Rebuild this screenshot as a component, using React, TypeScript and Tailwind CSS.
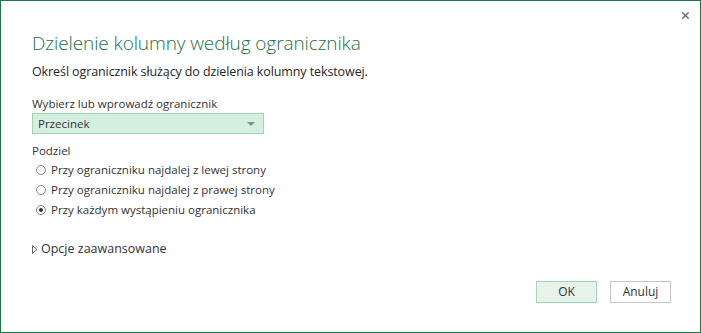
import { X } from 'lucide-react';

function Radio({ checked, label }: { checked?: boolean; label: string }) {
  return (
    <label className="flex items-center h-[20px] pl-[4px]">
      <span className="w-[10px] h-[10px] rounded-full border border-[#8a8a8a] bg-white flex items-center justify-center">
        {checked && <span className="w-[4px] h-[4px] rounded-full bg-[#333]" />}
      </span>
      <span className="ml-[5px]">{label}</span>
    </label>
  );
}

export default function App() {
  return (
    <div
      className="w-[701px] h-[333px] bg-white border border-[#217346] flex flex-col text-[#333] text-[11.5px]"
      style={{ fontFamily: '"Open Sans", "Noto Sans", sans-serif' }}
    >
      {/* Close */}
      <div className="flex justify-end h-[30px] pr-[9px] pt-[9px]">
        <X className="w-[11px] h-[11px] text-[#666]" strokeWidth={3} />
      </div>

      <div className="flex flex-col pl-[31px] flex-1">
        <h1 className="text-[19px] leading-[24px] font-light text-[#217346] tracking-[-0.1px]">
          Dzielenie kolumny według ogranicznika
        </h1>
        <p className="mt-[8px] text-[12.5px] leading-[18px] text-[#262626] tracking-[-0.1px]">
          Określ ogranicznik służący do dzielenia kolumny tekstowej.
        </p>

        <div className="mt-[15px] leading-[16px]">Wybierz lub wprowadź ogranicznik</div>
        <div className="mt-[1px] w-[232px] h-[21px] bg-[#d4efdf] border border-[#9fd5b5] flex items-center justify-between pl-[5px] pr-[8px]">
          <span>Przecinek</span>
          <span className="w-0 h-0 border-l-[4px] border-r-[4px] border-t-[4px] border-l-transparent border-r-transparent border-t-[#8a8a8a]" />
        </div>

        <div className="mt-[9px] leading-[16px]">Podziel</div>
        <div className="flex flex-col mt-[1px]">
          <Radio label="Przy ograniczniku najdalej z lewej strony" />
          <Radio label="Przy ograniczniku najdalej z prawej strony" />
          <Radio checked label="Przy każdym wystąpieniu ogranicznika" />
        </div>

        <div className="mt-[20px] flex items-center text-[12.5px] leading-[18px]">
          <svg width="6" height="9" viewBox="0 0 6 9" className="mr-[3px]">
            <path d="M0.5 0.5 L5 4.5 L0.5 8.5 Z" fill="none" stroke="#666" strokeWidth="1" />
          </svg>
          <span>Opcje zaawansowane</span>
        </div>
      </div>

      <div className="flex justify-end gap-[13px] pr-[29px] pb-[29px]">
        <button className="w-[61px] h-[22px] bg-[#e6f2ea] border border-[#a3d6b8] text-[12px]">OK</button>
        <button className="w-[61px] h-[22px] bg-white border border-[#c6c6c6] text-[12px]">Anuluj</button>
      </div>
    </div>
  );
}
